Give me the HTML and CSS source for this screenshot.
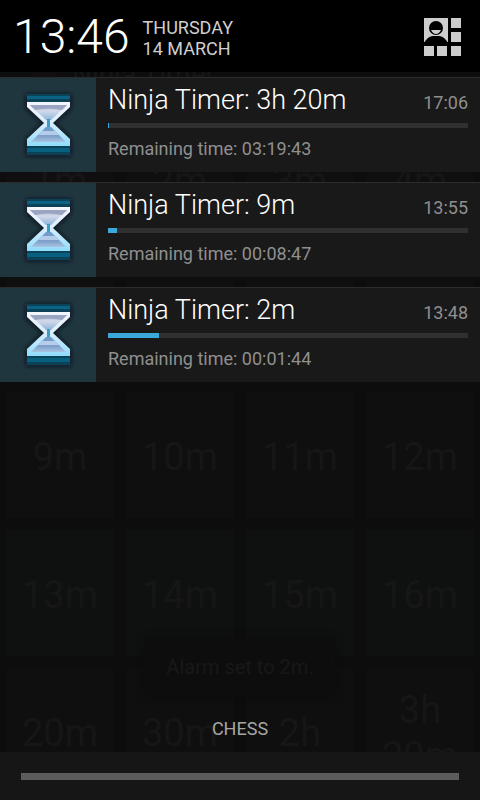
FILE: index.html
```html
<!DOCTYPE html>
<html lang="en">
<head>
  <meta charset="UTF-8" />
  <meta name="viewport" content="width=device-width, initial-scale=1.0" />
  <title>Ninja Timer</title>
  <link rel="stylesheet" href="styles.css">
</head>
<body>
  <svg class="defs" width="0" height="0">
    <defs>
      <linearGradient id="glassTop" x1="0" y1="0" x2="0" y2="1">
        <stop offset="0" stop-color="#a3adc8" />
        <stop offset="0.4" stop-color="#d3daea" />
        <stop offset="1" stop-color="#8fb4d8" />
      </linearGradient>
      <linearGradient id="glassBottom" x1="0" y1="0" x2="0" y2="1">
        <stop offset="0" stop-color="#6f9cc8" />
        <stop offset="0.6" stop-color="#7d9fcb" />
        <stop offset="1" stop-color="#a9c4e2" />
      </linearGradient>
      <linearGradient id="glassEdge" x1="0" y1="0" x2="0" y2="1">
        <stop offset="0" stop-color="#f4f6fc" />
        <stop offset="0.45" stop-color="#dcefff" />
        <stop offset="1" stop-color="#8fdcfb" />
      </linearGradient>
      <filter id="glow" x="-20%" y="-20%" width="140%" height="140%">
        <feGaussianBlur stdDeviation="2" />
      </filter>
      <symbol id="hourglass" viewBox="-1 2 56 76">
        <path d="M5 9H50V24L34 38L50 54V71H5V54L21 38L5 24Z" fill="#10191d" filter="url(#glow)" />
        <rect x="6" y="9" width="43" height="9" fill="#0c4257" />
        <rect x="6" y="11" width="43" height="3" fill="#0a6385" />
        <rect x="6" y="60" width="43" height="10" fill="#0c4257" />
        <rect x="6" y="63" width="43" height="4" fill="#076080" />
        <path d="M6 17H49V22L32 38L49 54V61H6V54L23 38L6 22Z" fill="url(#glassEdge)" />
        <path d="M9 20H46L30 35H25Z" fill="url(#glassTop)" />
        <path d="M9 20H46L41 25Q28 22 14 25Z" fill="#9ba4c0" />
        <path d="M25 42H30L45 57H10Z" fill="url(#glassBottom)" />
        <path d="M21 46H34L38 50H17Z" fill="#b5cde8" />
        <path d="M26 34H29V42H26Z" fill="#3d9dc4" />
      </symbol>
    </defs>
  </svg>

  <!-- app behind the shade -->
  <div class="app">
    <div class="app-bar">
      <span class="app-logo"></span>
      <span>Ninja Timer</span>
    </div>
    <div class="tiles">
      <button class="tile">1m</button>
      <button class="tile">2m</button>
      <button class="tile">3m</button>
      <button class="tile">4m</button>
      <div class="tile"></div>
      <div class="tile"></div>
      <div class="tile"></div>
      <div class="tile"></div>
      <button class="tile">9m</button>
      <button class="tile">10m</button>
      <button class="tile">11m</button>
      <button class="tile">12m</button>
      <button class="tile green">13m</button>
      <button class="tile green">14m</button>
      <button class="tile green">15m</button>
      <button class="tile green">16m</button>
      <button class="tile">20m</button>
      <button class="tile">30m</button>
      <button class="tile">2h</button>
      <button class="tile">3h 20m</button>
    </div>
    <div class="toast">Alarm set to 2m.</div>
  </div>

  <div class="shade">
    <header class="header">
      <div class="clock">13:46</div>
      <div class="date">THURSDAY<br>14 MARCH</div>
      <button class="settings" aria-label="Quick settings">
        <svg width="38" height="38" viewBox="0 0 38 38">
          <g fill="#cdcdcd">
            <rect x="0" y="0" width="24" height="24" />
            <rect x="27" y="0" width="10" height="10" />
            <rect x="27" y="14" width="10" height="10" />
            <rect x="0" y="28" width="10" height="10" />
            <rect x="13" y="28" width="10" height="10" />
            <rect x="27" y="28" width="10" height="10" />
          </g>
          <circle cx="12" cy="10" r="7" />
          <path d="M0 25Q4 18 9 18H15Q20 18 24 25Z" />
          <path d="M7 12H17Q15 16 12 16Q9 16 7 12Z" fill="#cdcdcd" />
        </svg>
      </button>
    </header>

    <main class="notifications">
      <article class="notification">
        <div class="icon"><svg width="56" height="76"><use href="#hourglass" /></svg></div>
        <div class="content">
          <div class="row">
            <h2>Ninja Timer: 3h 20m</h2>
            <time>17:06</time>
          </div>
          <progress value="17" max="12000" aria-label="Ninja Timer: 3h 20m"></progress>
          <p>Remaining time: 03:19:43</p>
        </div>
      </article>
      <article class="notification">
        <div class="icon"><svg width="56" height="76"><use href="#hourglass" /></svg></div>
        <div class="content">
          <div class="row">
            <h2>Ninja Timer: 9m</h2>
            <time>13:55</time>
          </div>
          <progress value="13" max="540" aria-label="Ninja Timer: 9m"></progress>
          <p>Remaining time: 00:08:47</p>
        </div>
      </article>
      <article class="notification">
        <div class="icon"><svg width="56" height="76"><use href="#hourglass" /></svg></div>
        <div class="content">
          <div class="row">
            <h2>Ninja Timer: 2m</h2>
            <time>13:48</time>
          </div>
          <progress value="17" max="120" aria-label="Ninja Timer: 2m"></progress>
          <p>Remaining time: 00:01:44</p>
        </div>
      </article>
    </main>

    <div class="carrier">CHESS</div>
    <footer class="handle"><div class="grip"></div></footer>
  </div>
</body>
</html>
```

FILE: styles.css
```css
* { box-sizing: border-box; }
body { margin: 0; background: #0d0d0d; color: #fff; font-family: Roboto, sans-serif; }
h2, p { margin: 0; font-weight: 400; }
button { border: 0; padding: 0; background: none; font-family: inherit; cursor: pointer; }
.defs { position: absolute; }

/* dimmed app */
.app { position: absolute; inset: 0; overflow: hidden; padding-top: 38px; color: #161616; }
.app-bar { display: flex; align-items: center; gap: 16px; height: 72px; padding-left: 32px; font-size: 28px; }
.app-logo { width: 24px; height: 24px; background: #120f10; }
.tiles { display: grid; grid-template-columns: repeat(4, 1fr); grid-auto-rows: 126px; gap: 12px; padding: 6px; }
.tile { padding-top: 4px; background: #0f0f0f; color: #161616; font-size: 38px; line-height: 46px; }
.tile.green { background: #0f1110; }
.toast { position: absolute; left: 50%; bottom: 104px; transform: translateX(-50%); padding: 16px 22px; border-radius: 6px; background: #0d0d0d; color: #181818; font-size: 20px; line-height: 26px; white-space: nowrap; box-shadow: 0 0 8px #0d0d0d; }

/* notification shade */
.shade { position: relative; display: flex; flex-direction: column; min-height: 100vh; }
.header { display: flex; align-items: center; height: 72px; padding: 0 18px 0 13px; background: #000; }
.clock { font-size: 48px; font-weight: 300; line-height: 72px; padding-top: 2px; }
.date { margin-left: 13px; padding-top: 3px; color: #cfcfcf; font-size: 18px; line-height: 21px; }
.settings { display: flex; margin-left: auto; padding-top: 2px; }

.notifications { display: flex; flex-direction: column; gap: 10px; padding-top: 5px; }
.notification { display: flex; height: 95px; background: #191919; border-top: 1px solid #2c2c2c; }
.icon { display: flex; align-items: center; justify-content: center; width: 96px; background: #1f363f; }
.content { flex: 1; padding: 4px 12px 0; }
.row { display: flex; align-items: baseline; justify-content: space-between; }
h2 { font-size: 27px; font-weight: 300; line-height: 36px; }
time { color: #8f8f8f; font-size: 18px; }
progress { display: block; width: 100%; height: 5px; margin-top: 5px; border: 0; background: #303030; appearance: none; }
progress::-webkit-progress-bar { background: #303030; }
progress::-webkit-progress-value { background: #3aa9da; }
progress::-moz-progress-bar { background: #3aa9da; }
.content p { margin-top: 10px; color: #8f8f8f; font-size: 18px; line-height: 21px; }

.carrier { margin-top: auto; padding-bottom: 12px; color: #a6a6a6; font-size: 18px; line-height: 22px; text-align: center; }
.handle { height: 48px; padding: 21px 21px 0; background: #161616; }
.grip { height: 7px; background: #5c5c5c; }
```
